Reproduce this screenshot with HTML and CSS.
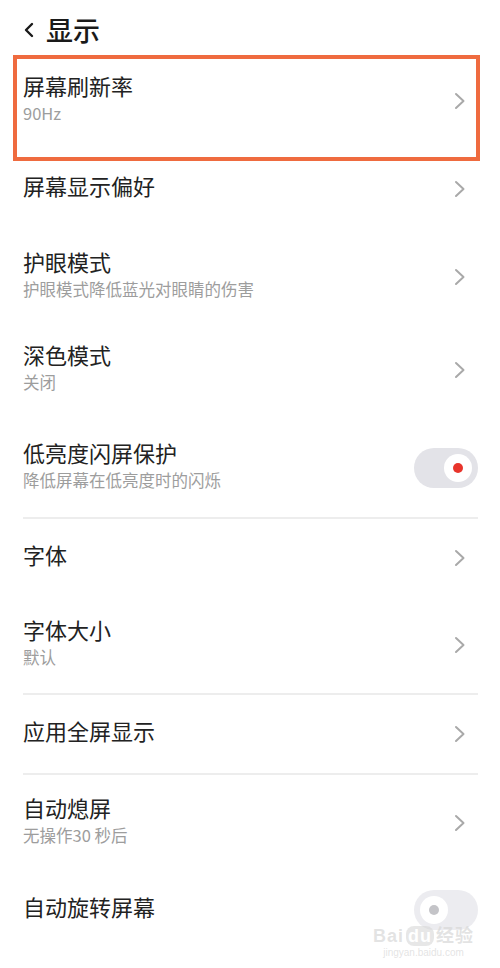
FILE: index.html
```html
<!DOCTYPE html>
<html>
<head>
  <meta charset="utf-8">
  <title>显示</title>
  <link rel="stylesheet" href="styles.css">
</head>
<body>

  <header class="topbar">
    <svg class="back" width="12" height="16" viewBox="0 0 12 16">
      <path d="M9 2 L3 8 L9 14" fill="none" stroke="#1a1a1a" stroke-width="2.4" stroke-linecap="round" stroke-linejoin="round"/>
    </svg>
    <h1>显示</h1>
  </header>

  <main class="list">
    <section class="group group-top">
      <div class="row marked">
        <div class="text">
          <div class="title">屏幕刷新率</div>
          <div class="sub">90Hz</div>
        </div>
        <svg class="chevron" width="12" height="18" viewBox="0 0 12 18"><path d="M2 2 L9.5 9 L2 16"/></svg>
        <div class="mark"></div>
      </div>

      <div class="row">
        <div class="text">
          <div class="title">屏幕显示偏好</div>
        </div>
        <svg class="chevron" width="12" height="18" viewBox="0 0 12 18"><path d="M2 2 L9.5 9 L2 16"/></svg>
      </div>

      <div class="row">
        <div class="text">
          <div class="title">护眼模式</div>
          <div class="sub">护眼模式降低蓝光对眼睛的伤害</div>
        </div>
        <svg class="chevron" width="12" height="18" viewBox="0 0 12 18"><path d="M2 2 L9.5 9 L2 16"/></svg>
      </div>

      <div class="row spaced">
        <div class="text">
          <div class="title">深色模式</div>
          <div class="sub">关闭</div>
        </div>
        <svg class="chevron" width="12" height="18" viewBox="0 0 12 18"><path d="M2 2 L9.5 9 L2 16"/></svg>
      </div>

      <div class="row spaced">
        <div class="text">
          <div class="title">低亮度闪屏保护</div>
          <div class="sub">降低屏幕在低亮度时的闪烁</div>
        </div>
        <div class="switch on"><span class="knob"></span></div>
      </div>
    </section>

    <section class="group">
      <div class="row">
        <div class="text">
          <div class="title">字体</div>
        </div>
        <svg class="chevron" width="12" height="18" viewBox="0 0 12 18"><path d="M2 2 L9.5 9 L2 16"/></svg>
      </div>

      <div class="row two-line">
        <div class="text">
          <div class="title">字体大小</div>
          <div class="sub">默认</div>
        </div>
        <svg class="chevron" width="12" height="18" viewBox="0 0 12 18"><path d="M2 2 L9.5 9 L2 16"/></svg>
      </div>
    </section>

    <section class="group">
      <div class="row">
        <div class="text">
          <div class="title">应用全屏显示</div>
        </div>
        <svg class="chevron" width="12" height="18" viewBox="0 0 12 18"><path d="M2 2 L9.5 9 L2 16"/></svg>
      </div>
    </section>

    <section class="group">
      <div class="row two-line">
        <div class="text">
          <div class="title">自动熄屏</div>
          <div class="sub">无操作30 秒后</div>
        </div>
        <svg class="chevron" width="12" height="18" viewBox="0 0 12 18"><path d="M2 2 L9.5 9 L2 16"/></svg>
      </div>

      <div class="row">
        <div class="text">
          <div class="title">自动旋转屏幕</div>
        </div>
        <div class="switch"><span class="knob"></span></div>
      </div>
    </section>
  </main>

  <div class="watermark">
    <div class="wm-logo">Bai<span class="wm-du">du</span>经验</div>
    <div class="wm-url">jingyan.baidu.com</div>
  </div>

</body>
</html>
```

FILE: styles.css
```css
body {
  margin: 0;
  background: #fff;
  font-family: "Noto Sans CJK SC", "Noto Sans", sans-serif;
  color: #222;
  position: relative;
  min-height: 968px;
  overflow: hidden;
}

.topbar {
  height: 57px;
  display: flex;
  align-items: center;
  padding: 3px 0 0 23px;
  box-sizing: border-box;
}

.back {
  margin-right: 11px;
}

.topbar h1 {
  margin: 0;
  font-size: 27px;
  font-weight: 500;
  line-height: 32px;
  color: #1a1a1a;
}

.list {
  padding: 0 22px 0 23px;
}

.group + .group {
  border-top: 2px solid #ededed;
}

.row {
  position: relative;
  display: flex;
  align-items: center;
  height: 78px;
}

.row.two-line {
  height: 96px;
}

.group-top .row {
  height: 88px;
}

.group-top .row.spaced {
  height: 98px;
}

.text {
  flex: 1;
  padding-bottom: 8px;
}

.title {
  font-size: 22px;
  line-height: 32px;
  color: #222;
}

.sub {
  font-size: 16.5px;
  line-height: 24px;
  color: #9d9d9d;
}

.chevron {
  margin-right: 12px;
}

.chevron path {
  fill: none;
  stroke: #a9a9a9;
  stroke-width: 2;
  stroke-linecap: round;
  stroke-linejoin: round;
}

/* orange annotation box around the first row */
.mark {
  position: absolute;
  top: -2px;
  left: -10px;
  right: -2px;
  height: 106px;
  border: 4px solid #ef6b3f;
  box-sizing: border-box;
}

.switch {
  width: 64px;
  height: 40px;
  border-radius: 20px;
  background: #ececf0;
  display: flex;
  align-items: center;
  padding: 0 6px;
  box-sizing: border-box;
}

.switch.on {
  justify-content: flex-end;
  background: #e3e3e8;
}

.knob {
  width: 28px;
  height: 28px;
  border-radius: 50%;
  background: #fff;
  display: flex;
  align-items: center;
  justify-content: center;
}

.knob::after {
  content: "";
  width: 10px;
  height: 10px;
  border-radius: 50%;
  background: #c4c4c8;
}

.switch.on .knob::after {
  background: #e8342b;
}

.watermark {
  position: absolute;
  right: 26px;
  bottom: 8px;
  color: rgba(215, 215, 215, 0.7);
  text-align: center;
  font-family: "Liberation Sans", sans-serif;
}

.wm-logo {
  font-size: 18px;
  font-weight: bold;
  line-height: 20px;
  letter-spacing: 1px;
  font-family: "Liberation Sans", "Noto Sans CJK SC", sans-serif;
}

.wm-du {
  display: inline-block;
  background: rgba(215, 215, 215, 0.6);
  color: #fff;
  border-radius: 8px;
  padding: 0 2px;
  margin: 0 2px;
}

.wm-url {
  font-size: 10px;
  line-height: 14px;
}
```
